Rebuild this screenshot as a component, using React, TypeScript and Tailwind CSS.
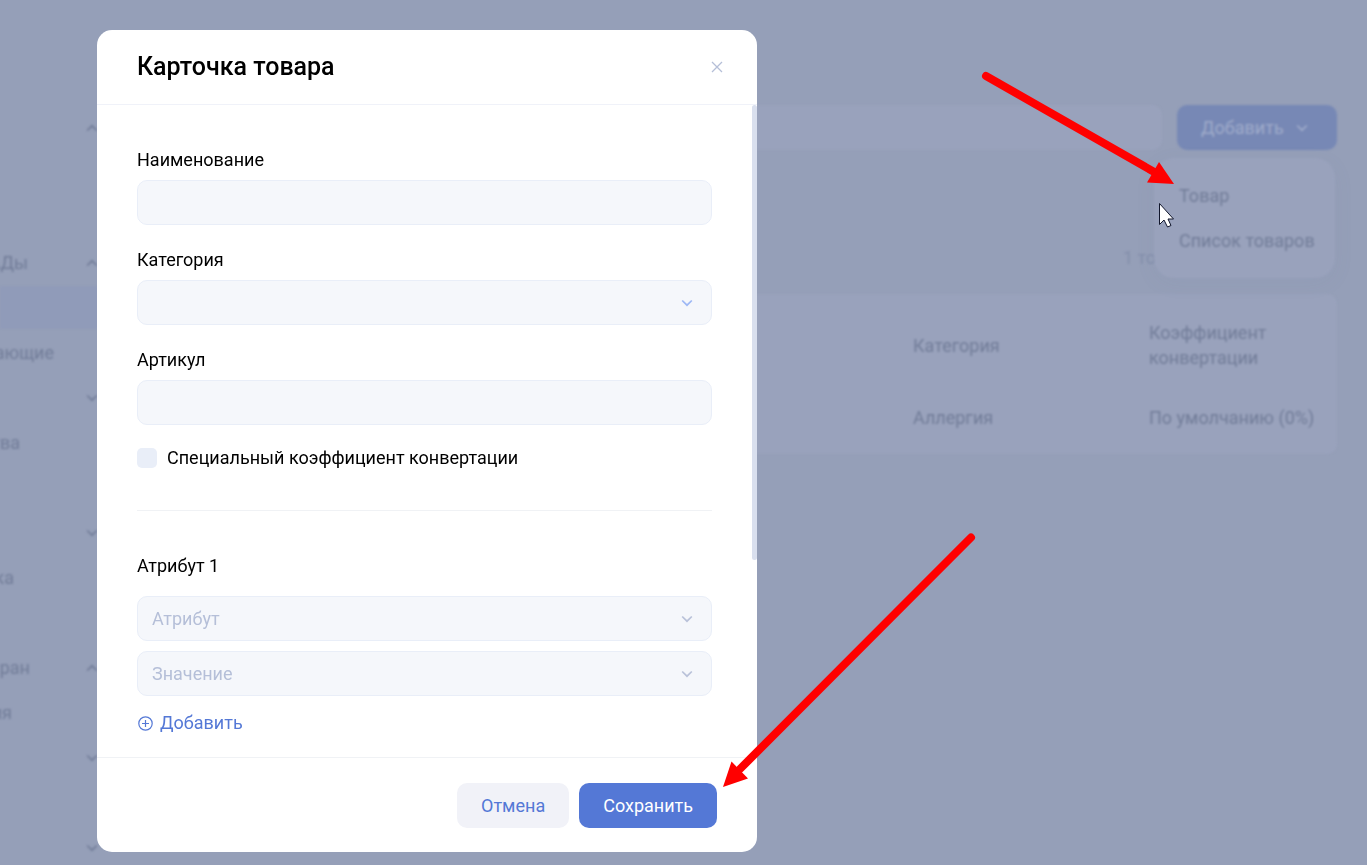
import type { ReactNode } from "react";

type MenuItem = {
  label?: string;
  width?: string;
  arrow?: "up" | "down";
  active?: boolean;
};

const menu: MenuItem[] = [
  { arrow: "up" },
  {},
  {},
  { label: "БАДы", width: "w-[28px]", arrow: "up" },
  { active: true },
  { label: "ающие", width: "w-[54px]" },
  { arrow: "down" },
  { label: "тва", width: "w-[20px]" },
  {},
  { arrow: "down" },
  { label: "ка", width: "w-[14px]" },
  {},
  { label: "ран", width: "w-[30px]", arrow: "up" },
  { label: "ия", width: "w-[12px]" },
  { arrow: "down" },
  {},
  { arrow: "down" },
];

function Chevron({ className = "" }: { className?: string }) {
  return (
    <svg
      viewBox="0 0 12 8"
      className={`w-3 h-2 shrink-0 ${className}`}
      fill="none"
      stroke="currentColor"
      strokeWidth="1.7"
      aria-hidden="true"
    >
      <path d="M1.2 1.5 6 6.2l4.8-4.7" />
    </svg>
  );
}

function Sidebar() {
  return (
    <nav className="w-[98px] shrink-0 pt-[105px]">
      <ul>
        {menu.map((item, index) => (
          <li
            key={index}
            className={`h-[45px] flex items-center justify-between ${
              item.active ? "bg-[#909bb9] bg-clip-content py-px" : ""
            }`}
          >
            <span
              className={`flex justify-end whitespace-nowrap ${item.width ?? ""}`}
            >
              {item.label}
            </span>
            {item.arrow && (
              <Chevron className={item.arrow === "up" ? "rotate-180" : ""} />
            )}
          </li>
        ))}
      </ul>
    </nav>
  );
}

function Catalog() {
  return (
    <main className="flex-1 min-w-0 pt-[105px] pl-10 pr-[30px]">
      <div className="relative flex gap-[15px]">
        <input
          type="search"
          aria-label="Поиск"
          className="flex-1 min-w-0 h-[45px] rounded-[10px] bg-[#99a2bc]"
        />
        <button
          type="button"
          className="w-[160px] h-[45px] pl-6 rounded-[10px] bg-[#7788b5] text-[#9fabca] flex items-center gap-3"
        >
          Добавить
          <Chevron />
        </button>

        {/* Dropdown under the button */}
        <div className="absolute right-0.5 top-[53px] w-[181px] rounded-[20px] bg-[#99a2bc] shadow-[0_5px_20px_rgba(110,125,160,0.08)] py-[15px]">
          <a href="#item" className="flex items-center h-[45px] pl-[25px]">
            Товар
          </a>
          <a
            href="#list"
            className="flex items-center h-[45px] pl-[25px] whitespace-nowrap"
          >
            Список товаров
          </a>
        </div>
      </div>

      <p className="mt-[95px] w-[214px] ml-auto text-[#838eaa]">1 товар</p>

      <div className="mt-6 pb-4 rounded-[10px] bg-[#99a2bc]">
        <table className="w-full table-fixed text-left">
          <colgroup>
            <col />
            <col className="w-[236px]" />
            <col className="w-[188px]" />
          </colgroup>
          <thead>
            <tr className="h-[102px]">
              <th />
              <th className="font-normal">Категория</th>
              <th className="font-normal">Коэффициент конвертации</th>
            </tr>
          </thead>
          <tbody>
            <tr className="h-[42px]">
              <td />
              <td>Аллергия</td>
              <td className="whitespace-nowrap">По умолчанию (0%)</td>
            </tr>
          </tbody>
        </table>
      </div>
    </main>
  );
}

const fieldClass =
  "block w-full h-[45px] rounded-[10px] border border-[#e9eef8] bg-[#f5f7fb] px-3.5";

function Field({
  id,
  label,
  children,
}: {
  id: string;
  label: string;
  children: ReactNode;
}) {
  return (
    <div>
      <label htmlFor={id} className="block leading-[26px] mb-[7px]">
        {label}
      </label>
      {children}
    </div>
  );
}

function Select({
  id,
  placeholder = "",
  arrowClass = "text-[#b9c2d9]",
}: {
  id: string;
  placeholder?: string;
  arrowClass?: string;
}) {
  return (
    <div className="grid items-center">
      <select
        id={id}
        aria-label={placeholder || undefined}
        className={`${fieldClass} appearance-none text-[#b5bfd8] col-start-1 row-start-1`}
      >
        <option value="">{placeholder}</option>
      </select>
      <Chevron
        className={`col-start-1 row-start-1 justify-self-end mr-[19px] pointer-events-none ${arrowClass}`}
      />
    </div>
  );
}

function ProductModal() {
  return (
    <div
      role="dialog"
      aria-labelledby="modal-title"
      className="w-full max-w-[660px] rounded-[15px] bg-white text-black overflow-hidden"
    >
      <header className="h-[75px] pl-10 pr-[30px] flex items-center justify-between border-b border-[#f0f2f9]">
        <h1 id="modal-title" className="text-[25px] leading-[30px] font-medium">
          Карточка товара
        </h1>
        <button
          type="button"
          aria-label="Закрыть"
          className="size-5 flex items-center justify-center text-[#b5bfd8]"
        >
          <svg
            viewBox="0 0 12 12"
            className="size-3"
            fill="none"
            stroke="currentColor"
            strokeWidth="1.3"
          >
            <path d="M1 1l10 10M11 1 1 11" />
          </svg>
        </button>
      </header>

      <form id="product" className="relative pt-[42px] pb-[21px] pl-10 pr-[45px]">
        {/* Scrollbar thumb */}
        <div className="absolute right-0 top-0 w-[5px] h-[455px] rounded-full bg-[#d9dfee]" />

        <div className="flex flex-col gap-[22px]">
          <Field id="name" label="Наименование">
            <input id="name" type="text" className={fieldClass} />
          </Field>
          <Field id="category" label="Категория">
            <Select id="category" arrowClass="text-[#9db8f5]" />
          </Field>
          <Field id="sku" label="Артикул">
            <input id="sku" type="text" className={fieldClass} />
          </Field>
        </div>

        <div className="mt-[23px] flex items-center gap-2.5">
          <input
            id="special"
            type="checkbox"
            className="appearance-none size-5 rounded-[5px] bg-[#e9eef8]"
          />
          <label htmlFor="special" className="leading-5">
            Специальный коэффициент конвертации
          </label>
        </div>

        <hr className="my-[42px] border-[#f0f2f5]" />

        <h2 className="leading-[26px] mb-[17px]">Атрибут 1</h2>
        <div className="flex flex-col gap-2.5">
          <Select id="attribute" placeholder="Атрибут" />
          <Select id="value" placeholder="Значение" />
        </div>
        <button
          type="button"
          className="mt-3.5 flex items-center gap-1.5 leading-[26px] text-[#5478d6]"
        >
          <svg
            viewBox="0 0 17 17"
            className="size-[17px]"
            fill="none"
            stroke="currentColor"
            strokeWidth="1.2"
            aria-hidden="true"
          >
            <circle cx="8.5" cy="8.5" r="6.7" />
            <path d="M8.5 5v7M5 8.5h7" />
          </svg>
          Добавить
        </button>
      </form>

      <footer className="border-t border-[#f0f2f5] pt-[25px] pb-6 pr-10 flex justify-end gap-2.5">
        <button
          type="button"
          className="h-[45px] px-6 rounded-[10px] bg-[#f1f2f8] text-[#5478d6]"
        >
          Отмена
        </button>
        <button
          type="submit"
          form="product"
          className="h-[45px] px-6 rounded-[10px] bg-[#5478d6] text-white"
        >
          Сохранить
        </button>
      </footer>
    </div>
  );
}

function Pointers() {
  return (
    <svg
      width="1367"
      height="865"
      viewBox="0 0 1367 865"
      className="absolute left-0 top-0 pointer-events-none"
      aria-hidden="true"
    >
      <g stroke="#f00" strokeWidth="8" strokeLinecap="round">
        <path d="M986 76 1156 173" />
        <path d="M971 537.5 740 769" />
      </g>
      <path d="M1174 184 1159 162 1147 182.5z" fill="#f00" />
      <path d="M723 787 731.5 761.5 748 778.5z" fill="#f00" />
      <path
        d="M1159.5 203.500v21l4.500-4.500 3.500 7 3.500-1.500-3-6.500h5.500z"
        fill="#fff"
        stroke="#10152b"
      />
    </svg>
  );
}

export default function App() {
  return (
    <div className="relative min-h-screen overflow-hidden bg-[#959fb8] font-[Roboto,sans-serif] text-lg leading-[25px]">
      <div className="flex text-[#717c98] blur-[1px]">
        <Sidebar />
        <Catalog />
      </div>
      <div className="absolute inset-0 pt-[30px] pl-[97px]">
        <ProductModal />
      </div>
      <Pointers />
    </div>
  );
}
